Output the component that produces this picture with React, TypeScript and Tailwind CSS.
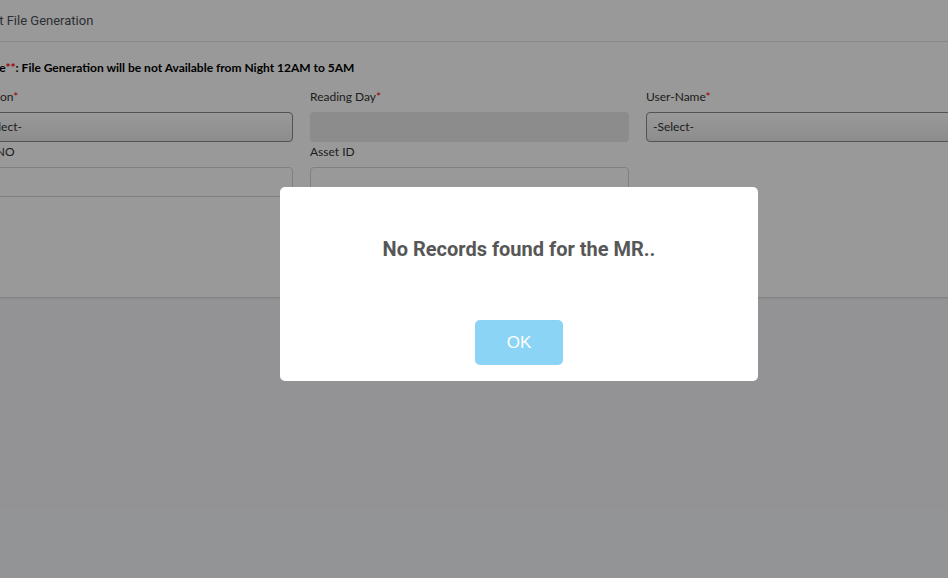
import React from 'react';

const Label: React.FC<{ text: string; required?: boolean }> = ({ text, required }) => (
  <label className="block text-[12px] leading-[18px] text-[#333] mb-[6px]">
    {text}
    {required && <span className="text-[#ff0000]">*</span>}
  </label>
);

const SelectBox: React.FC = () => (
  <div className="h-[30px] rounded-[4px] border border-[#8a8a8a] bg-gradient-to-b from-[#ffffff] to-[#ebebeb] px-[6px] flex items-center text-[12px] text-[#333]">
    -Select-
  </div>
);

export default function App() {
  return (
    <div className="relative w-[948px] h-[578px] overflow-hidden bg-[#f5f6f8] font-['Lato','Liberation_Sans',sans-serif]">
      {/* page under the dialog */}
      <div className="-ml-[40px] w-[1040px] h-[297px] bg-white shadow-[0_1px_2px_rgba(0,0,0,0.15)]">
        <div className="h-[42px] border-b border-[#e3e3e3] pl-[14px] flex items-center font-['Roboto',sans-serif] text-[13px] text-[#4a5059]">
          Input File Generation
        </div>
        <div className="px-[14px] pt-[17px]">
          <p className="text-[12px] font-bold text-black leading-[18px] mb-[11px] ml-[5px]">
            Note<span className="text-[#ff0000]">**</span>: File Generation will be not Available from Night 12AM to 5AM
          </p>
          <div className="grid grid-cols-[319px_319px_319px] gap-x-[17px]">
            <div>
              <Label text="Section" required />
              <SelectBox />
            </div>
            <div>
              <Label text="Reading Day" required />
              <div className="h-[30px] rounded-[4px] bg-[#e9eaec]" />
            </div>
            <div>
              <Label text="User-Name" required />
              <SelectBox />
            </div>
            <div className="mt-[1px]">
              <Label text="MR NO" />
              <div className="h-[30px] rounded-[4px] border border-[#d6d6d6] bg-white" />
            </div>
            <div className="mt-[1px]">
              <Label text="Asset ID" />
              <div className="h-[30px] rounded-[4px] border border-[#d6d6d6] bg-white" />
            </div>
          </div>
        </div>
      </div>

      {/* overlay */}
      <div className="absolute inset-0 bg-black/40" />

      {/* alert */}
      <div className="absolute left-[280px] top-[187px] w-[478px] h-[194px] rounded-[5px] bg-white flex flex-col items-center">
        <h2 className="mt-[50px] font-['Roboto',sans-serif] font-bold text-[20px] leading-[24px] text-[#575757]">
          No Records found for the MR..
        </h2>
        <button className="mt-[59px] w-[88px] h-[45px] rounded-[5px] bg-[#8cd4f5] text-white text-[17px] font-['Liberation_Sans',sans-serif]">
          OK
        </button>
      </div>
    </div>
  );
}
